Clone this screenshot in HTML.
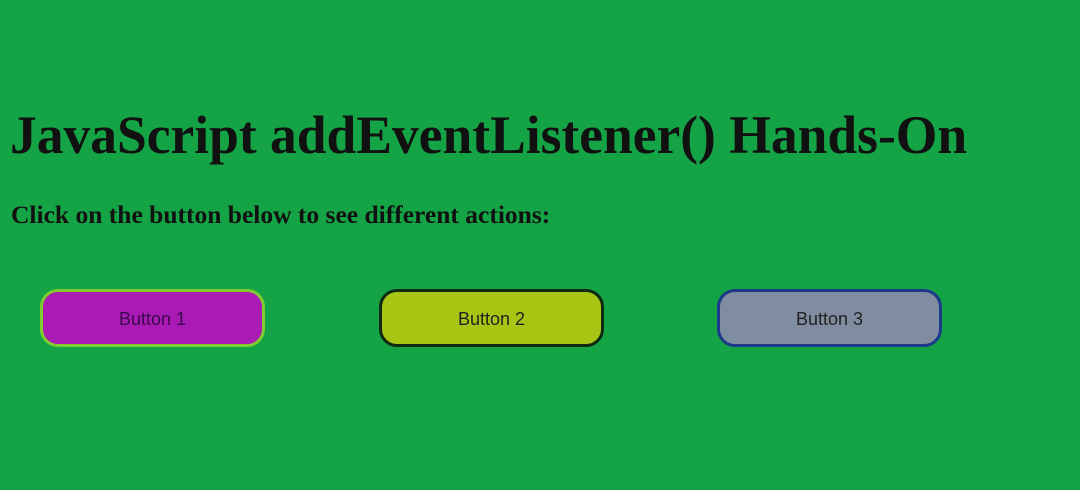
<!DOCTYPE html>
<html><head><style>
html,body{margin:0;padding:0;width:1080px;height:490px;background:#14a345;overflow:hidden}
h1{position:absolute;left:10px;top:104px;margin:0;font:bold 53.5px "Liberation Serif",serif;color:#111;white-space:nowrap}
p{position:absolute;left:11px;top:200px;margin:0;font:bold 25.5px "Liberation Serif",serif;color:#111;white-space:nowrap}
.b{position:absolute;top:289px;width:225px;height:58px;box-sizing:border-box;padding-top:3px;border-radius:18px;border:3px solid;font:18px "Liberation Sans",sans-serif;color:#222;display:flex;align-items:center;justify-content:center}
</style></head><body>
<h1>JavaScript addEventListener() Hands-On</h1>
<p>Click on the button below to see different actions:</p>
<div class="b" style="left:40px;background:#aa1bb3;border-color:#7fcc30;color:#3a0a50">Button 1</div>
<div class="b" style="left:379px;background:#a8c514;border-color:#0e2a12">Button 2</div>
<div class="b" style="left:717px;background:#808ca0;border-color:#1c3a8a">Button 3</div>
</body></html>
